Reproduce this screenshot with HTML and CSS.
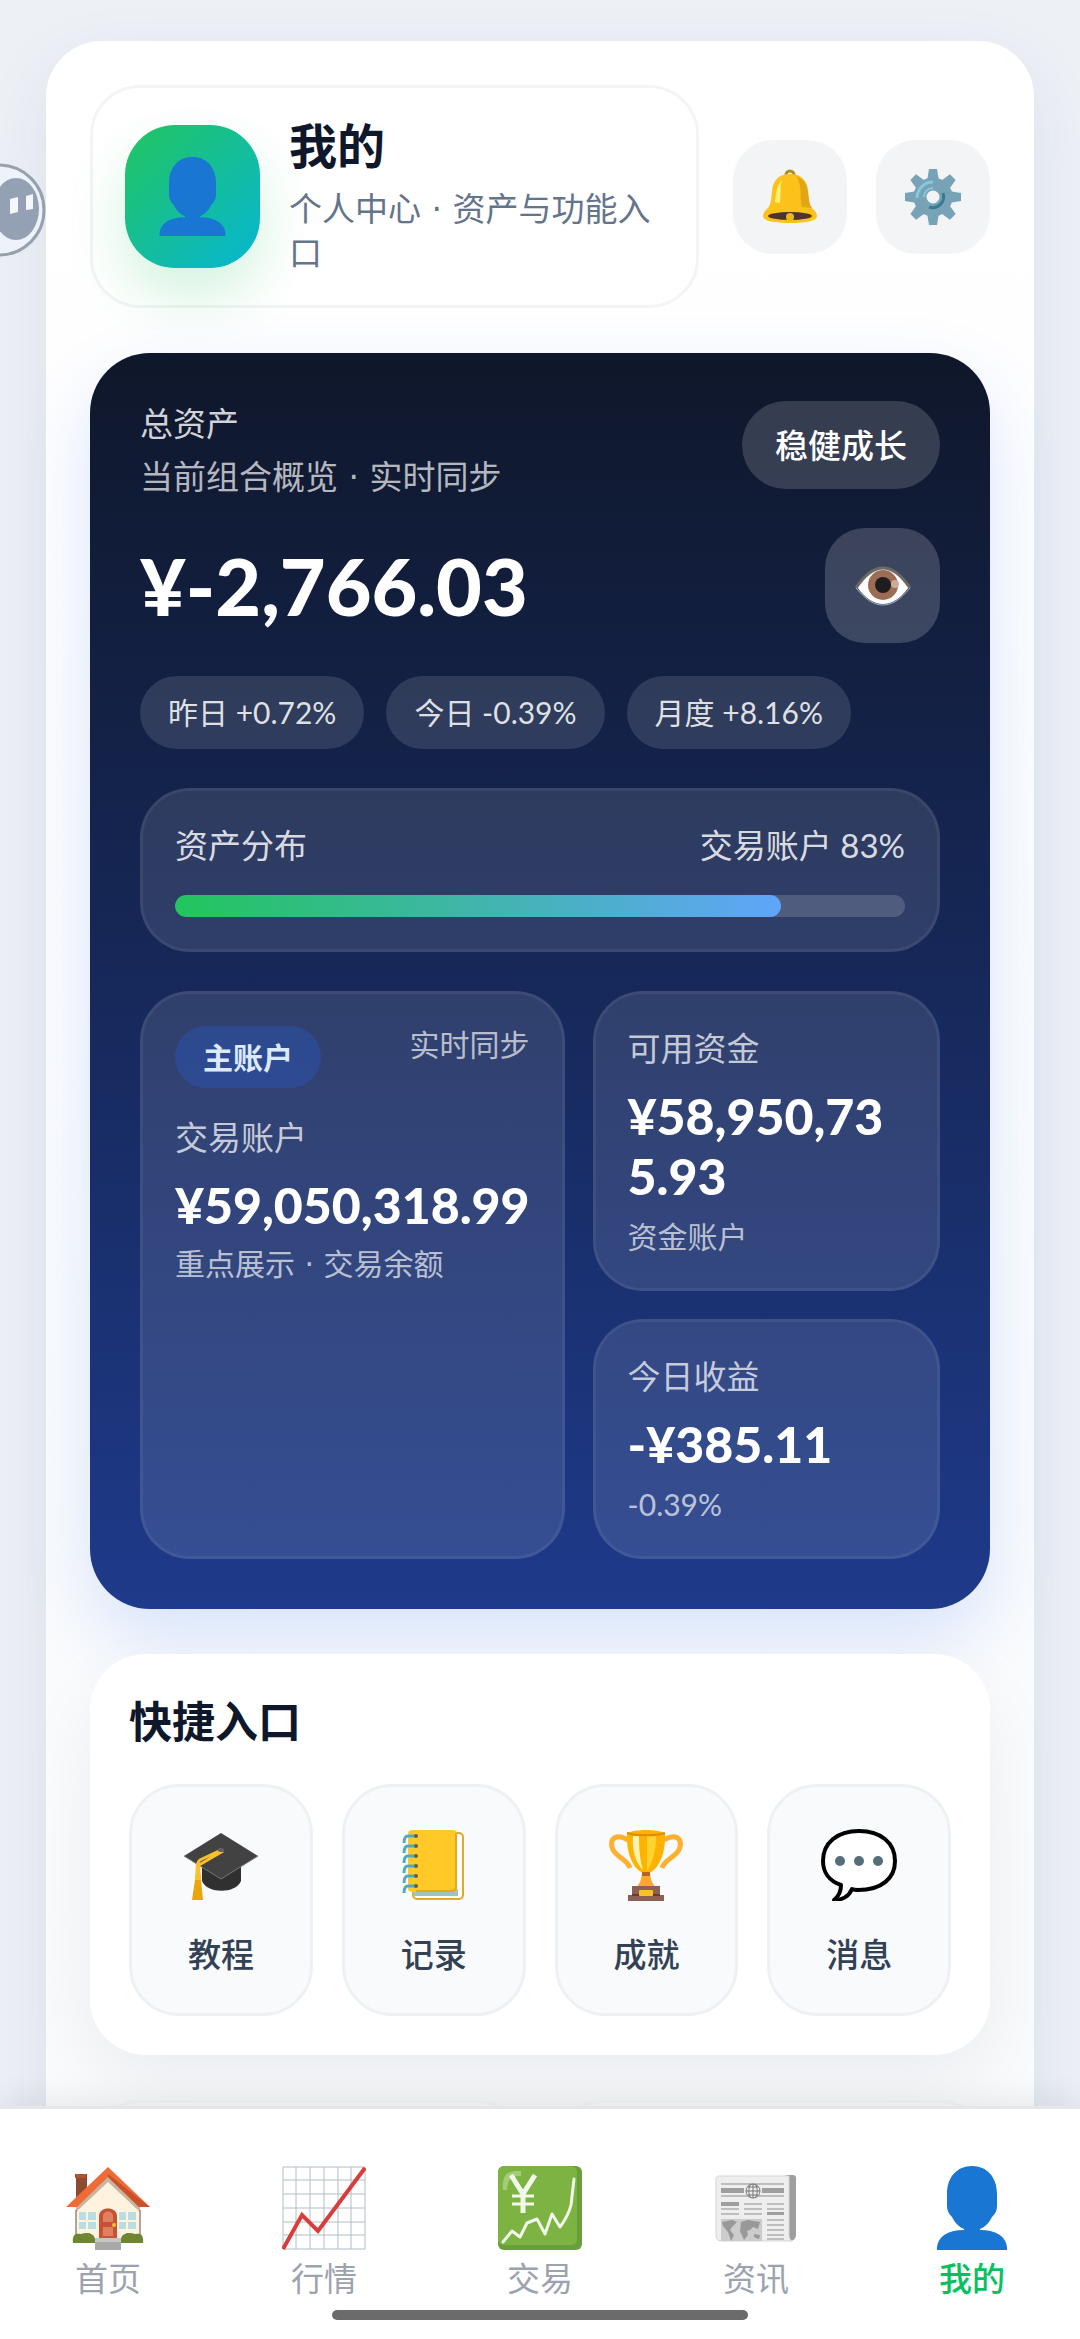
FILE: index.html
```html
<!DOCTYPE html>
<html lang="zh-CN">

<head>
  <meta charset="utf-8">
  <meta name="viewport" content="width=device-width, initial-scale=1">
  <title>我的</title>
  <link rel="stylesheet" href="styles.css">
</head>

<body>
  <!-- 公用图形 -->
  <svg class="defs" width="0" height="0" aria-hidden="true">
    <defs>
      <symbol id="user" viewBox="0 0 84 84">
        <path fill="#1976d2" d="M42 0c15 0 25 11 25 28v12c0 5-2 8-5 11-3 6-7 10-12 12v1c17 0 26 7 27 17v3H7v-3c1-10 10-17 27-17v-1c-5-2-9-6-12-12-3-3-5-6-5-11V28C17 11 27 0 42 0z"/>
      </symbol>
    </defs>
  </svg>

  <main class="page">
    <div class="app">
      <header class="header">
        <div class="profile">
          <div class="avatar"><svg><use href="#user"/></svg></div>
          <div class="profile-text">
            <h1>我的</h1>
            <p>个人中心 · 资产与功能入口</p>
          </div>
        </div>
        <div class="actions">
          <button class="icon-btn" type="button" aria-label="通知">
            <svg viewBox="0 0 56 56">
              <circle cx="28" cy="6" r="4" fill="none" stroke="#b38a1d" stroke-width="3"/>
              <path fill="#fcc21b" d="M28 5c11 0 17 6 18 17 1 9 1 13 4 17 3 3 5 5 5 8 0 5-12 7-27 7S1 52 1 47c0-3 2-5 5-8 3-4 3-8 4-17C11 11 17 5 28 5z"/>
              <path fill="#e2a610" d="M34 7c8 3 11 8 12 16 1 8 1 12 4 16l-10-1c-3-8 1-22-6-31z"/>
              <path fill="#fff176" d="M20 11c-5 4-6 14-7 22l5 1c1-9 0-17 2-23z"/>
              <ellipse cx="28" cy="47" rx="22" ry="4" fill="#4e342e"/>
              <circle cx="28" cy="48" r="4" fill="#e9b91e"/>
            </svg>
          </button>
          <button class="icon-btn" type="button" aria-label="设置">
            <svg viewBox="0 0 56 56">
              <g fill="#78a3b7">
                <path id="tooth" d="M24 0h8l2 12H22zM24 56h8l2-12H22z"/>
                <use href="#tooth" transform="rotate(45 28 28)"/>
                <use href="#tooth" transform="rotate(90 28 28)"/>
                <use href="#tooth" transform="rotate(135 28 28)"/>
              </g>
              <circle cx="28" cy="28" r="13" fill="none" stroke="#78a3b7" stroke-width="13"/>
              <path d="M12 29a16 16 0 0 1 16-16" fill="none" stroke="#86c8dc" stroke-width="3"/>
              <path d="M19 28a9 9 0 0 1 9-9" fill="none" stroke="#86c8dc" stroke-width="2"/>
              <path d="M38 24a11 11 0 0 1-14 14" fill="none" stroke="#357c93" stroke-width="3"/>
            </svg>
          </button>
        </div>
      </header>

      <section class="assets">
        <div class="assets-top">
          <div>
            <p class="assets-title">总资产</p>
            <p class="assets-sub">当前组合概览 · 实时同步</p>
          </div>
          <span class="tag">稳健成长</span>
        </div>
        <div class="total">
          <strong>¥-2,766.03</strong>
          <button class="eye-btn" type="button" aria-label="隐藏金额">
            <svg viewBox="0 0 56 40">
              <path fill="#fff" d="M2 21C11 8 19 3 28 3s17 5 26 18c-9 12-17 17-26 17S11 33 2 21z"/>
              <circle cx="28" cy="19" r="15" fill="#9b6d54"/>
              <circle cx="28" cy="19" r="8" fill="#1d1d1f"/>
              <circle cx="40" cy="18" r="4" fill="#d0aa9b"/>
              <path fill="none" stroke="#6c6865" stroke-width="3" d="M1 22C11 7 19 2 28 2s17 5 27 20"/>
              <path fill="none" stroke="#9fb3c4" stroke-width="1" d="M1 22c10 12 18 17 27 17s17-5 27-17"/>
            </svg>
          </button>
        </div>
        <div class="chips">
          <span class="chip">昨日 +0.72%</span>
          <span class="chip">今日 -0.39%</span>
          <span class="chip">月度 +8.16%</span>
        </div>
        <div class="panel">
          <div class="panel-row">
            <span>资产分布</span>
            <span>交易账户 83%</span>
          </div>
          <div class="bar"><div class="bar-fill" style="width: 83%"></div></div>
        </div>
        <div class="stats">
          <div class="stat stat-main">
            <div class="stat-head">
              <span class="badge">主账户</span>
              <span class="stat-note">实时同步</span>
            </div>
            <p class="stat-label">交易账户</p>
            <p class="stat-value">¥59,050,318.99</p>
            <p class="stat-note">重点展示 · 交易余额</p>
          </div>
          <div class="stat">
            <p class="stat-label">可用资金</p>
            <p class="stat-value">¥58,950,735.93</p>
            <p class="stat-note">资金账户</p>
          </div>
          <div class="stat">
            <p class="stat-label">今日收益</p>
            <p class="stat-value">-¥385.11</p>
            <p class="stat-note">-0.39%</p>
          </div>
        </div>
      </section>

      <section class="quick">
        <h2>快捷入口</h2>
        <div class="quick-grid">
          <a class="quick-item" href="#course">
            <svg viewBox="0 0 76 72">
              <path fill="#303030" d="M19 34v18c5 13 34 13 39 0V34z"/>
              <path fill="#424242" d="M38 4 75 27 38 50 1 27z"/>
              <path fill="none" stroke="#777" stroke-width="1" d="M1 27l37 23 37-23"/>
              <path fill="none" stroke="#fbc02d" stroke-width="3" d="M40 22 16 36v11M36 22 17 31c-3 2-3 6-3 16"/>
              <ellipse cx="38" cy="21" rx="3" ry="2" fill="#616161"/>
              <path fill="#e8a50c" d="M12 45h6v6l2 20H9l3-20z"/>
              <path fill="#fbc02d" d="M12 45h6v6h-6z"/>
            </svg>
            <span>教程</span>
          </a>
          <a class="quick-item" href="#record">
            <svg viewBox="0 0 76 72">
              <rect x="17" y="4" width="50" height="66" rx="4" fill="#fff" stroke="#dda92e" stroke-width="2"/>
              <path fill="#9dc5bb" d="M15 60h47v7H18z"/>
              <rect x="12" y="1" width="49" height="62" rx="4" fill="#ffca28"/>
              <path fill="none" stroke="#e3a91c" stroke-width="2" d="M60 4v54c0 3-1 4-4 4H20"/>
              <g fill="none" stroke="#4fa9c0" stroke-width="3">
                <path id="ring" d="M20 7h-8c-3 0-4 2-4 7"/>
                <use href="#ring" y="10"/>
                <use href="#ring" y="20"/>
                <use href="#ring" y="30"/>
                <use href="#ring" y="40"/>
                <use href="#ring" y="50"/>
              </g>
              <g fill="#5d6242">
                <circle cx="20" cy="7" r="2"/>
                <circle cx="20" cy="17" r="2"/>
                <circle cx="20" cy="27" r="2"/>
                <circle cx="20" cy="37" r="2"/>
                <circle cx="20" cy="47" r="2"/>
                <circle cx="20" cy="57" r="2"/>
              </g>
            </svg>
            <span>记录</span>
          </a>
          <a class="quick-item" href="#achievement">
            <svg viewBox="0 0 76 72">
              <path fill="none" stroke="#ffb02e" stroke-width="5" d="M20 11C9 4 2 9 4 18c2 10 15 11 18 21M56 11c11-7 18-2 16 7-2 10-15 11-18 21"/>
              <path fill="#ffa726" d="M34 42h8c0 8 2 12 6 17H28c4-5 6-9 6-17z"/>
              <path fill="#ffb300" d="M19 4c8-4 30-4 38 0 1 20-6 36-16 40h-6C25 40 18 24 19 4z"/>
              <path fill="#fff3b0" d="M25 7h6c0 14 1 24 4 34-8-8-11-20-10-34z"/>
              <path fill="#ffd42e" d="M39 7h9c0 15-3 25-9 35z"/>
              <path fill="none" stroke="#e08a12" stroke-width="2" d="M19 4c8 3 30 3 38 0"/>
              <path fill="#b5651d" d="M34 43h8v4h-8z"/>
              <path fill="#8d6053" d="M24 57h28v9h4v6H20v-6h4z"/>
              <path fill="#5f4037" d="M24 65h28v2H24z"/>
              <rect x="31" y="61" width="14" height="6" rx="1" fill="#fbc02d"/>
            </svg>
            <span>成就</span>
          </a>
          <a class="quick-item" href="#message">
            <svg viewBox="0 0 76 72">
              <path fill="#fff" stroke="#000" stroke-width="4" stroke-linejoin="round" d="M38 2c22 0 36 12 36 30 0 17-13 29-37 29-2 0-4 0-6-1-3 7-9 11-18 11 5-4 7-9 7-15C8 52 2 43 2 32 2 14 16 2 38 2z"/>
              <g fill="#546e7a">
                <circle cx="19" cy="32" r="5"/>
                <circle cx="38" cy="32" r="5"/>
                <circle cx="57" cy="32" r="5"/>
              </g>
            </svg>
            <span>消息</span>
          </a>
        </div>
      </section>

      <div class="more">
        <div class="more-card"></div>
        <div class="more-card"></div>
      </div>
    </div>
  </main>

  <nav class="tabbar">
    <a class="tab" href="#home">
      <svg viewBox="0 0 84 84">
        <path fill="#8d4a33" d="M10 8h11v28H10z"/>
        <path fill="#b5532f" d="M9 8h11v4H9z"/>
        <path fill="#fff3e0" d="M10 39 42 8l32 31v38H10z"/>
        <path fill="#c5b5a2" d="M10 41 42 10l32 31v5L42 16 10 46z"/>
        <path fill="#ef6c37" d="M42 1 84 41H73L42 11 11 41H0z"/>
        <path fill="#c9502a" d="M84 41H73L42 11v-3z"/>
        <path fill="none" stroke="#6d4c41" stroke-width="1" d="M10 44v26M74 44v26"/>
        <path fill="#b9dde0" d="M13 46h7v8h-7zM22 46h8v8h-8zM13 56h7v7h-7zM22 56h8v7h-8zM53 46h7v8h-7zM62 46h8v8h-8zM53 56h7v7h-7zM62 56h8v7h-8z"/>
        <path fill="#c75134" d="M33 73V50c0-10 18-10 18 0v23z"/>
        <path fill="#df8060" d="M37 56v-6c0-6 10-6 10 0v6zM37 61h10v9H37z"/>
        <circle cx="48" cy="59" r="2" fill="#fbc02d"/>
        <path fill="#6f8530" d="M7 77c-1-9 3-10 8-9 6-2 13-1 14 5v4zM77 77c1-9-3-10-8-9-6-2-13-1-14 5v4z"/>
        <path fill="#a8a8a8" d="M29 72h26v12H29z"/>
        <path fill="#c6c6c6" d="M29 72h26v4H29z"/>
      </svg>
      <span>首页</span>
    </a>
    <a class="tab" href="#market">
      <svg viewBox="0 0 84 84">
        <path fill="#fff" stroke="#b0bec5" stroke-width="1" d="M1 1h82v82H1zM14 1v82M28 1v82M42 1v82M56 1v82M69 1v82M1 14h82M1 28h82M1 42h82M1 56h82M1 69h82"/>
        <path fill="none" stroke="#d93c3c" stroke-width="4" d="M1 83 20 49l16 16L83 2"/>
      </svg>
      <span>行情</span>
    </a>
    <a class="tab" href="#trade">
      <svg viewBox="0 0 84 84">
        <rect width="84" height="84" rx="6" fill="#689f38"/>
        <rect width="79" height="79" rx="6" fill="#7cb342"/>
        <path fill="#a4cb76" d="M5 24C4 9 8 4 23 5v5C12 10 10 14 9 24z"/>
        <path fill="none" stroke="#f1f8e9" stroke-width="5" d="M13 9l12 19L37 9M25 28v19"/>
        <path fill="none" stroke="#f1f8e9" stroke-width="3" d="M14 30h22M14 38h22"/>
        <path fill="none" stroke="#f1f8e9" stroke-width="3" stroke-linecap="round" stroke-linejoin="round" d="M5 76l9-11 8 6 7-14 10-4 8 15 7-20 8 13c6-8 9-14 11-22l3-26"/>
      </svg>
      <span>交易</span>
    </a>
    <a class="tab" href="#news">
      <svg viewBox="0 0 84 84">
        <path fill="#9e9e9e" d="M72 9h7c2 0 3 1 3 3v56c0 4-2 7-6 7H60z"/>
        <path fill="#eee" stroke="#d5d5d5" stroke-width="1" d="M5 10h70v58c0 4 1 6 3 7H7c-3 0-5-2-5-5V13c0-2 1-3 3-3z"/>
        <path fill="#9e9e9e" d="M7 22h23v5H7zM48 22h22v5H48zM7 36h18v4H7zM53 46h17v3H53z"/>
        <path stroke="#8d8d8d" stroke-width="1" d="M7 18h63M7 30h63M30 38h18M53 38h17M7 43h18M7 48h18M30 43h18M30 48h18M53 43h17M53 54h17M53 59h17M53 64h17M53 69h17M53 73h17"/>
        <circle cx="39" cy="25" r="7" fill="#eee" stroke="#757575" stroke-width="1"/>
        <path fill="none" stroke="#757575" stroke-width="1" d="M32 25h14M39 18v14M34 21h10M34 29h10M37 18c-3 4-3 10 0 14M41 18c3 4 3 10 0 14"/>
        <path fill="#ccc" d="M7 53h41v22H7z"/>
        <path fill="#999" d="M8 56l10-2 5 2-5 5-2 3 4 5-3 6-3-9-5-6zM27 56l7-2 12 2-2 7-5-2-3 3-3 1 1 4-4 5-4-9zM40 68l6 1-1 4-5-2z"/>
      </svg>
      <span>资讯</span>
    </a>
    <a class="tab active" href="#mine">
      <svg><use href="#user"/></svg>
      <span>我的</span>
    </a>
    <div class="home-bar"></div>
  </nav>

  <button class="assistant" type="button" aria-label="助手">
    <svg viewBox="0 0 94 94">
      <circle cx="47" cy="47" r="45" fill="#eef3fa" stroke="#96a0af" stroke-width="3"/>
      <ellipse cx="64" cy="46" rx="23" ry="31" fill="#94a0b3"/>
      <path fill="#f4f8fd" d="M58 36l8-2v15l-8 2zM74 33l7-2v15l-7 1z"/>
    </svg>
  </button>
</body>

</html>
```
FILE: styles.css
```css
* {
  box-sizing: border-box;
}

html {
  height: 100%;
  font-family: Lato, 'Noto Sans CJK SC', sans-serif;
}

body {
  height: inherit;
  margin: 0;
  display: flex;
  flex-direction: column;
  background: #edf0f5;
  color: #0f172a;
  overflow: hidden;
}

h1, h2, p {
  margin: 0;
}

button {
  border: 0;
  padding: 0;
  font: inherit;
}

a {
  color: inherit;
  text-decoration: none;
}

svg {
  display: block;
}

.defs {
  position: absolute;
}

.page {
  flex: 1;
  min-height: 0;
  padding: 41px 46px 0;
  overflow: hidden;
}

.app {
  display: flex;
  flex-direction: column;
  gap: 45px;
  padding: 44px;
  border-radius: 56px;
  background: linear-gradient(180deg, #fff 0%, #f8fafc 100%);
  box-shadow: 0 24px 72px rgba(30, 58, 138, 0.08);
}

/* 头部 */
.header {
  display: flex;
  align-items: center;
  gap: 34px;
}

.profile {
  flex: 1;
  display: flex;
  align-items: center;
  gap: 29px;
  min-height: 223px;
  padding: 24px 32px;
  border: 3px solid #f3f4f6;
  border-radius: 50px;
  background: #fff;
}

.avatar {
  flex: none;
  display: flex;
  align-items: center;
  justify-content: center;
  width: 135px;
  height: 143px;
  border-radius: 50px;
  background: linear-gradient(135deg, #22c55e, #06b6d4);
  box-shadow: 0 28px 56px rgba(34, 197, 94, 0.2);
}

.avatar svg {
  width: 79px;
  height: 79px;
}

.profile-text h1 {
  margin-bottom: 14px;
  font-size: 48px;
  line-height: 56px;
}

.profile-text p {
  font-size: 33px;
  line-height: 44px;
  color: #64748b;
}

/* 间隔点两侧留宽一些 */
.profile-text p,
.assets-sub,
.stat-main .stat-note {
  font-family: 'DejaVu Sans', 'Noto Sans CJK SC', sans-serif;
}

.actions {
  display: flex;
  gap: 29px;
}

.icon-btn {
  display: flex;
  align-items: center;
  justify-content: center;
  width: 114px;
  height: 114px;
  border-radius: 40px;
  background: #f3f4f6;
}

.icon-btn svg {
  width: 56px;
  height: 56px;
}

/* 总资产 */
.assets {
  padding: 48px 50px 50px;
  border-radius: 60px;
  background: linear-gradient(180deg, #0f172a, #1e3a8a);
  box-shadow: 0 30px 72px rgba(37, 99, 235, 0.16);
  color: #fff;
}

.assets-top {
  display: flex;
  justify-content: space-between;
  align-items: flex-start;
}

.assets-title {
  margin-bottom: 11px;
  font-size: 33px;
  line-height: 44px;
  color: rgba(255, 255, 255, 0.82);
}

.assets-sub {
  font-size: 33px;
  line-height: 44px;
  color: rgba(255, 255, 255, 0.7);
}

.tag {
  padding: 0 33px;
  border-radius: 44px;
  background: rgba(255, 255, 255, 0.16);
  font-size: 33px;
  font-weight: 500;
  line-height: 88px;
}

.total {
  display: flex;
  justify-content: space-between;
  align-items: center;
  margin-top: 28px;
}

.total strong {
  font-size: 79px;
  font-weight: 900;
  line-height: 92px;
}

.eye-btn {
  display: flex;
  align-items: center;
  justify-content: center;
  width: 115px;
  height: 115px;
  border-radius: 40px;
  background: rgba(255, 255, 255, 0.18);
}

.eye-btn svg {
  width: 56px;
  height: 40px;
}

.chips {
  display: flex;
  flex-wrap: wrap;
  gap: 22px;
  margin-top: 33px;
}

.chip {
  padding: 0 28px;
  border-radius: 37px;
  background: rgba(255, 255, 255, 0.12);
  color: rgba(255, 255, 255, 0.86);
  font-size: 30px;
  line-height: 73px;
}

.panel,
.stat {
  padding: 32px;
  border: 3px solid rgba(255, 255, 255, 0.06);
  border-radius: 50px;
  background: rgba(255, 255, 255, 0.11);
}

.panel {
  margin-top: 39px;
}

.panel-row {
  display: flex;
  justify-content: space-between;
  font-size: 33px;
  line-height: 44px;
  color: rgba(255, 255, 255, 0.84);
}

.bar {
  height: 22px;
  margin-top: 28px;
  border-radius: 11px;
  background: rgba(255, 255, 255, 0.16);
  overflow: hidden;
}

.bar-fill {
  height: 100%;
  border-radius: 11px;
  background: linear-gradient(90deg, #22c55e, #60a5fa);
}

.stats {
  display: grid;
  grid-template-columns: 11fr 9fr;
  gap: 28px;
  margin-top: 39px;
}

.stat-main {
  grid-row: span 2;
}

.stat-head {
  display: flex;
  justify-content: space-between;
  align-items: flex-start;
  margin-bottom: 27px;
}

.badge {
  padding: 0 28px;
  border-radius: 31px;
  background: rgba(37, 99, 235, 0.26);
  color: #dbeafe;
  font-size: 30px;
  font-weight: 700;
  line-height: 62px;
}

.stat-label {
  font-size: 33px;
  line-height: 44px;
  color: rgba(255, 255, 255, 0.72);
}

.stat-value {
  margin: 16px 0 10px;
  font-size: 50px;
  font-weight: 900;
  line-height: 60px;
  word-break: break-all;
}

.stat-main .stat-value {
  white-space: nowrap;
}

.stat-note {
  font-size: 30px;
  line-height: 40px;
  color: rgba(255, 255, 255, 0.68);
}

/* 快捷入口 */
.quick {
  padding: 39px;
  border-radius: 56px;
  background: #fff;
  box-shadow: 0 28px 72px rgba(15, 23, 42, 0.06);
}

.quick h2 {
  font-size: 43px;
  line-height: 58px;
}

.quick-grid {
  display: grid;
  grid-template-columns: repeat(4, 1fr);
  gap: 29px;
  margin-top: 33px;
}

.quick-item {
  display: flex;
  flex-direction: column;
  align-items: center;
  padding: 42px 0 37px;
  border: 3px solid #eef1f4;
  border-radius: 50px;
  background: #f8fafc;
  color: #334155;
  font-size: 33px;
  font-weight: 500;
  line-height: 44px;
}

.quick-item svg {
  width: 76px;
  height: 72px;
  margin-bottom: 31px;
}

.more {
  display: grid;
  grid-template-columns: repeat(2, 1fr);
  gap: 28px;
}

.more-card {
  height: 200px;
  border: 3px solid #f3f4f6;
  border-radius: 50px;
  background: #fafafb;
}

/* 底部导航 */
.tabbar {
  position: relative;
  flex: none;
  display: grid;
  grid-template-columns: repeat(5, 1fr);
  padding: 57px 0 39px;
  border-top: 3px solid #e5e6e9;
  background: #fff;
  box-shadow: 0 -6px 30px rgba(0, 0, 0, 0.08);
}

.tab {
  display: flex;
  flex-direction: column;
  align-items: center;
  gap: 6px;
  color: #9ca3af;
  font-size: 33px;
  line-height: 44px;
}

.tab svg {
  width: 84px;
  height: 84px;
}

.tab.active {
  color: #07c160;
  font-weight: 500;
}

.home-bar {
  position: absolute;
  left: 50%;
  bottom: 19px;
  width: 416px;
  height: 10px;
  margin-left: -208px;
  border-radius: 5px;
  background: #6b6b6b;
}

/* 悬浮助手 */
.assistant {
  position: absolute;
  top: 163px;
  left: -48px;
  width: 94px;
  height: 94px;
  border-radius: 50%;
  background: none;
}
```
